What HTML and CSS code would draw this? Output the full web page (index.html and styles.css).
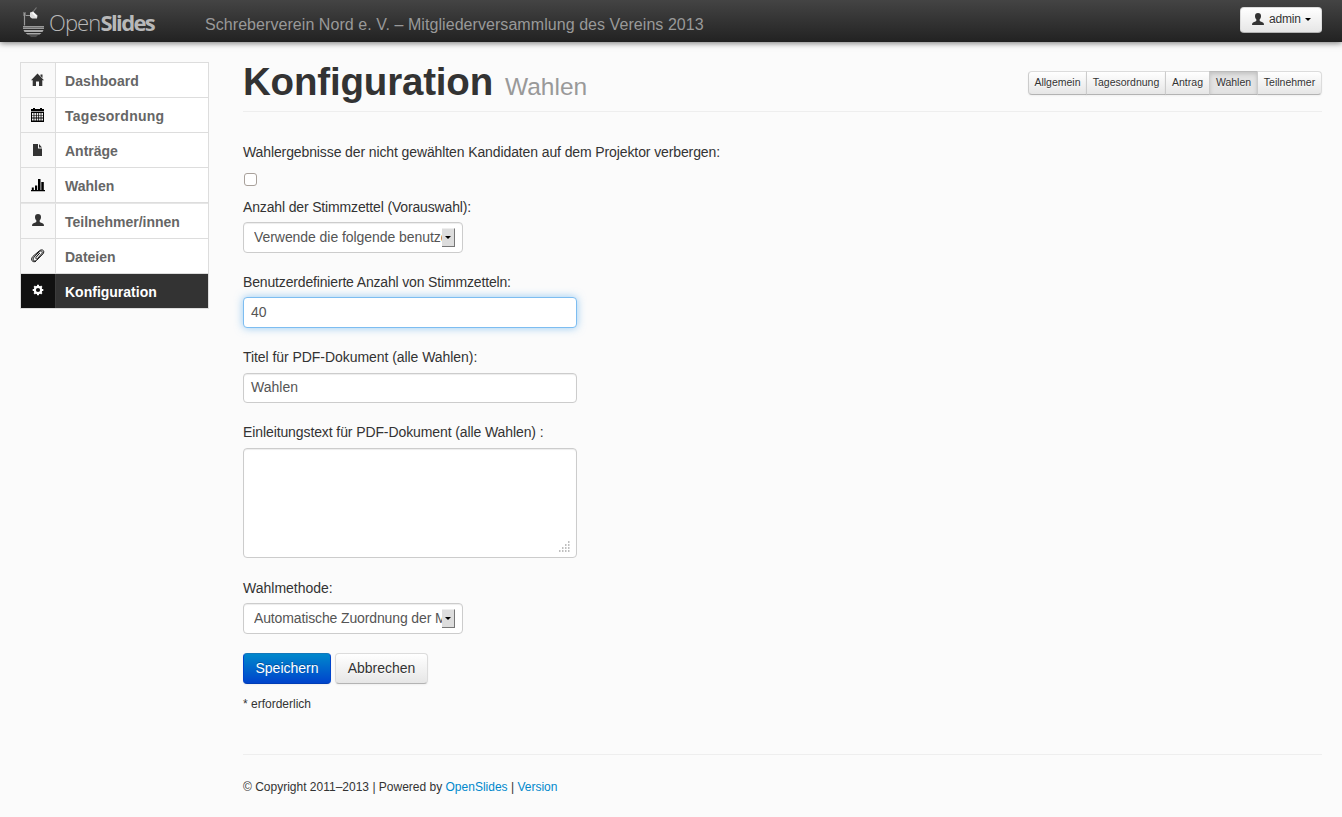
FILE: index.html
```
<!DOCTYPE html>
<html lang="de">
<head>
<meta charset="utf-8">
<title>Konfiguration – OpenSlides</title>
<link rel="stylesheet" href="styles.css">
</head>
<body>
<header class="topbar">
  <a class="logo">
    <svg class="logo-mark" width="22" height="30" viewBox="0 0 22 30">
      <path d="M1.500 18.500V6M0 6h3M0 8h3M3 8.500h5" fill="none" stroke="#999" stroke-width="1.200"/>
      <path d="M9.500 5.500L13.500 .5" stroke="#777" stroke-width="1.200"/>
      <path d="M7 5.500l3-1 4.500 4-.5 3H9L7 10z" fill="#ddd"/>
      <path d="M9.500 5.500l4 4" stroke="#fff" stroke-width="1.500"/>
      <path d="M0 19h21v3H0z" fill="#999"/>
      <path d="M.5 23h20l-1 2h-18zM2.500 26h16l-2 1.500h-12z" fill="#aaa"/>
      <path d="M6 28.500h9l-2 1H8z" fill="#777"/>
      <path d="M0 20.500h21" stroke="#666" stroke-width=".8"/>
    </svg>
    <span class="logo-text"><span class="logo-open">Open</span><span class="logo-slides">Slides</span></span>
  </a>
  <span class="event">Schreberverein Nord e. V. – Mitgliederversammlung des Vereins 2013</span>
  <button class="btn user-btn">
    <svg width="12" height="12" viewBox="0 0 12 12"><path d="M6 0c2 0 3 1 3 3 0 1.500-.5 2.500-1.300 3.300V8c1 .9 3.400 1.100 4 2.200l.3 1.800H0l.3-1.800C.9 9.100 3.300 8.900 4.300 8V6.300C3.500 5.500 3 4.500 3 3c0-2 1-3 3-3z" fill="#333"/></svg>
    <span>admin</span><i class="caret"></i>
  </button>
</header>
<div class="page">
  <nav class="sidebar">
    <a class="item"><span class="icon"><svg width="14" height="14" viewBox="0 0 14 14"><path d="M6.500 .6L13 7.300H11.300V13H8V8.500H5V13H1.700V7.300H0zM9.500 1.500h2v3.500l-2-2z" fill="#333"/></svg></span><span class="label l1">Dashboard</span></a>
    <a class="item"><span class="icon"><svg width="14" height="14" viewBox="0 0 14 14"><path d="M0 1h13v13H0z"/><path d="M2 0h2v2H2zM9 0h2v2H9z"/><path d="M0 3.500h13" stroke="#bbb" stroke-width=".8"/><path d="M1 6h11M1 8.500h11M1 11.500h11" stroke="#eee" stroke-width="2" stroke-dasharray="1.600 .75"/></svg></span><span class="label l2">Tagesordnung</span></a>
    <a class="item"><span class="icon"><svg width="14" height="14" viewBox="0 0 14 14"><path d="M2 1h5v4.500h4V13H2zM8 1l3 3.500H8z" fill="#333"/></svg></span><span class="label l3">Anträge</span></a>
    <a class="item"><span class="icon"><svg width="14" height="14" viewBox="0 0 14 14"><path d="M0 12h14v1.300H0zM.8 9.500h2V12h-2zM4 7.500h2.200V12H4zM7 1h2.500v11H7zM10.300 4h2.500v8h-2.500z"/></svg></span><span class="label l4">Wahlen</span></a>
    <a class="item tall"><span class="icon"><svg width="14" height="14" viewBox="0 0 14 14"><path d="M7 0c2 0 3 1 3 3 0 1.500-.5 2.500-1.300 3.300V8c1 .9 3.400 1.100 4 2.200L13 12H1l.3-1.800c.6-1.100 3-1.300 4-2.200V6.300C4.500 5.500 4 4.500 4 3c0-2 1-3 3-3z" fill="#333"/></svg></span><span class="label l5">Teilnehmer/innen</span></a>
    <a class="item"><span class="icon"><svg width="14" height="14" viewBox="0 0 14 14"><path d="M8.800 4L5 8.300c-.9 1.200.5 2.300 1.500 1.200L10.800 4.500c1.400-1.900-.7-3.500-2.300-1.900L3 8.200C.8 11 3.300 13.300 5.800 11.200L11.800 5c2.700-3.200-.8-5.600-3.600-3L1.800 7.500C-1 11 1.800 14 5 12.200" fill="none" stroke="#111" stroke-width="1"/></svg></span><span class="label l6">Dateien</span></a>
    <a class="item active"><span class="icon"><svg width="14" height="14" viewBox="0 0 14 14"><circle cx="7" cy="7" r="3.200" fill="none" stroke="#fff" stroke-width="2.200"/><path d="M7 1.700v2M7 10.300v2M1.700 7h2M10.300 7h2M3.200 3.200l1.300 1.300M9.500 9.500l1.300 1.300M10.800 3.200L9.500 4.500M4.500 9.500l-1.300 1.300" stroke="#fff" stroke-width="2"/></svg></span><span class="label l7">Konfiguration</span></a>
  </nav>
  <main class="content">
    <div class="page-header">
      <h1><span class="title">Konfiguration</span><small>Wahlen</small></h1>
      <div class="btn-group">
        <a class="btn mini t1">Allgemein</a><a class="btn mini t2">Tagesordnung</a><a class="btn mini t3">Antrag</a><a class="btn mini t4 pressed">Wahlen</a><a class="btn mini t5">Teilnehmer</a>
      </div>
    </div>
    <form>
      <label class="f1">Wahlergebnisse der nicht gewählten Kandidaten auf dem Projektor verbergen:</label>
      <div class="checkbox"></div>
      <label class="f2">Anzahl der Stimmzettel (Vorauswahl):</label>
      <div class="field select"><span class="value v1">Verwende die folgende benutze</span><span class="arrow"><i></i></span></div>
      <label class="f3">Benutzerdefinierte Anzahl von Stimmzetteln:</label>
      <div class="field text focus">40</div>
      <label class="f4">Titel für PDF-Dokument (alle Wahlen):</label>
      <div class="field text">Wahlen</div>
      <label class="f5">Einleitungstext für PDF-Dokument (alle Wahlen) :</label>
      <div class="field area"><svg width="12" height="12" viewBox="0 0 12 12"><path d="M10 .5h1.500M7 3.500h4.500M4 6.500h7.500M1 9.500h10.500" transform="translate(0 .5)" stroke="#aaa" stroke-width="1.500" stroke-dasharray="1.500 1.500"/></svg></div>
      <label class="f6">Wahlmethode:</label>
      <div class="field select"><span class="value v2">Automatische Zuordnung der M</span><span class="arrow"><i></i></span></div>
      <div class="actions"><a class="btn big primary">Speichern</a><a class="btn big cancel">Abbrechen</a></div>
      <p class="required">* erforderlich</p>
    </form>
    <footer>© Copyright 2011–2013 | Powered by <a>OpenSlides</a> | <a>Version</a></footer>
  </main>
</div>
</body>
</html>
```
FILE: styles.css
```
* { box-sizing: border-box; }
body { margin: 0; height: 817px; overflow: hidden; background: #fbfbfb; color: #333; font: 14px/20px "Liberation Sans", Arial, sans-serif; }
svg { display: block; flex: none; }
.topbar { height: 42px; display: flex; align-items: flex-start; padding: 0 20px 0 23px; background: linear-gradient(#444, #222); box-shadow: 0 1px 6px rgba(0,0,0,.55); white-space: nowrap; }
.logo { display: flex; width: 182px; padding-top: 7px; color: #b8b8b8; }
.logo-text { margin-left: 4px; font: 22px/31px "Open Sans", sans-serif; }
.logo-open { font-weight: 300; letter-spacing: -.9px; }
.logo-slides { font-weight: 700; letter-spacing: -1.600px; }
.event { flex: 1; padding-top: 15px; font-size: 16px; color: #999; letter-spacing: .06px; }
.btn { display: block; border: 1px solid #ccc; border-color: #dcdcdc #dcdcdc #b3b3b3; background: linear-gradient(#fff, #e6e6e6); color: #333; text-shadow: 0 1px 1px rgba(255,255,255,.75); box-shadow: 0 1px 2px rgba(0,0,0,.05); text-align: center; white-space: nowrap; }
.user-btn { display: flex; align-items: center; width: 82px; height: 26px; margin-top: 7px; padding: 0 10px 2px 11px; border-radius: 4px; font: 12px/20px "Liberation Sans", Arial, sans-serif; }
.user-btn span { margin-left: 5px; letter-spacing: -.2px; }
.caret { margin-left: 4px; border: 3.500px solid transparent; border-top-color: #000; border-bottom: 0; }
.page { display: flex; gap: 34px; padding: 20px 20px 0; }
.sidebar { width: 189px; height: 247px; flex: none; border: 1px solid #ddd; }
.item { display: flex; height: 35px; border-bottom: 1px solid #ddd; background: #fff; }
.item.tall { height: 36px; border-top: 1px solid #e6e6e6; }
.item.active { height: 34px; border: 0; background: #333; }
.icon { display: flex; justify-content: center; width: 35px; padding-top: 10px; background: #f9f9f9; border-right: 1px solid #ddd; }
.active .icon { background: #111; border-color: #3c3c3c; padding-top: 9px; }
.label { padding: 8px 0 0 9px; font-weight: 700; color: #666; white-space: nowrap; }
.l1 { letter-spacing: .1px; }
.l2 { letter-spacing: .27px; }
.active .label { color: #fff; }
.content { flex: 1; min-width: 0; }
.page-header { display: flex; justify-content: space-between; height: 50px; border-bottom: 1px solid #eee; }
h1 { display: flex; align-items: baseline; margin: 0; font-size: 38.500px; line-height: 40px; }
.title { letter-spacing: -.18px; }
small { margin-left: 12px; font-size: 24.500px; font-weight: 400; color: #999; }
.btn-group { display: flex; padding-top: 9px; }
.mini { height: 24px; margin-left: -1px; padding: 0; font-size: 10.500px; line-height: 21px; border-left-color: #ccc; }
.mini:first-child { border-radius: 4px 0 0 4px; }
.mini:last-child { border-radius: 0 4px 4px 0; }
.t1 { width: 59px; } .t2 { width: 80px; } .t3 { width: 45px; } .t4 { width: 49px; } .t5 { width: 65px; }
.pressed { background: #e3e3e3; border-color: #bbb #ccc #b3b3b3; box-shadow: inset 0 2px 4px rgba(0,0,0,.15); }
form { display: block; padding-top: 30px; }
label { display: block; width: max-content; height: 20px; margin-bottom: 5px; white-space: nowrap; }
.f1 { letter-spacing: -.11px; }
.f2 { letter-spacing: -.15px; }
.f3 { letter-spacing: -.16px; }
.f4 { letter-spacing: -.055px; }
.f5 { letter-spacing: -.1px; }
.checkbox { width: 13px; height: 13px; margin: 11px 0 11px 1px; border: 1px solid #a9a19b; border-radius: 3px; background: #fff; }
.field { height: 31px; margin-bottom: 19px; border: 1px solid #ccc; border-radius: 4px; background: #fff; color: #555; box-shadow: inset 0 1px 1px rgba(0,0,0,.075); }
.select { display: flex; align-items: center; width: 220px; padding: 0 7px 1px 10px; }
.value { width: 188px; flex: none; overflow: hidden; white-space: nowrap; }
.v1 { letter-spacing: -.06px; }
.v2 { letter-spacing: -.13px; }
.arrow { display: flex; align-items: center; justify-content: center; width: 14px; height: 19px; background: #ddd; border-right: 1px solid #777; border-bottom: 1px solid #777; border-top: 1px solid #eee; }
.arrow i { border: 3px solid transparent; border-top-color: #000; border-bottom: 0; }
.text { width: 334px; padding: 4px 7px; }
.focus { border-color: #7dbdf1; box-shadow: 0 0 8px rgba(82,168,236,.6); }
.focus + label { margin-bottom: 6px; }
.focus + label + .text { height: 30px; padding-top: 3px; }
.area { display: flex; align-items: flex-end; justify-content: flex-end; width: 334px; height: 110px; margin: 6px 0 20px; padding: 0 6px 4px; }
.actions { display: flex; gap: 4px; }
.big { height: 31px; border-radius: 4px; line-height: 28px; }
.primary { width: 88px; border-color: #1277bb #0044cc #003db5; background: linear-gradient(#0088cc, #0044cc); color: #fff; text-shadow: 0 -1px 0 rgba(0,0,0,.25); }
.cancel { width: 93px; }
.required { margin: 10px 0 40px; font-size: 12px; }
footer { padding-top: 22px; border-top: 1px solid #eee; font-size: 12px; }
footer a { color: #0088cc; }
```
